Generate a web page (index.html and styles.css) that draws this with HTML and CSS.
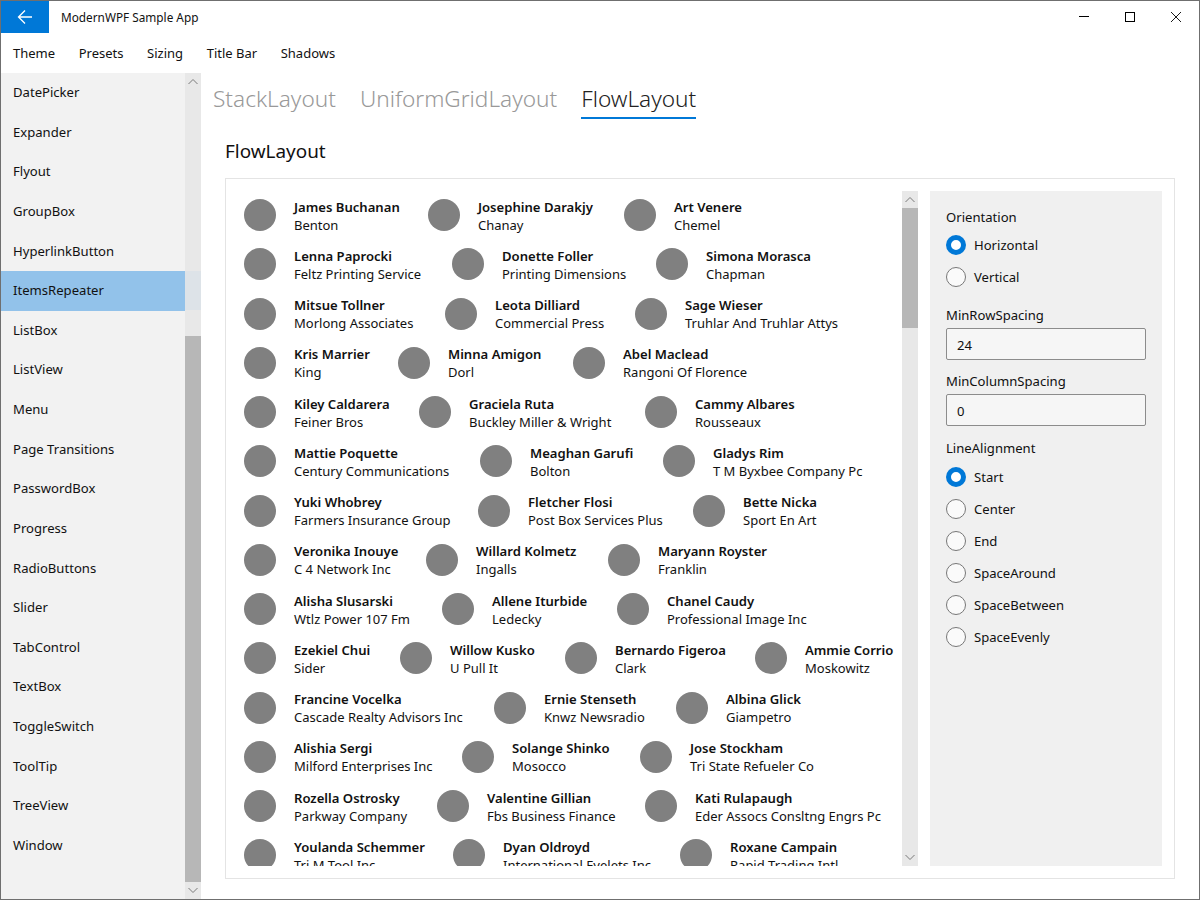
FILE: index.html
```html
<!DOCTYPE html>
<html>
  <head>
    <title>ModernWPF Sample App</title>
    <link rel="stylesheet" href="styles.css">
  </head>
  <body>
    <div class="window">
      <div class="titlebar">
        <div class="back-btn">
          <svg width="16" height="16" viewBox="0 0 16 16"><path d="M1.5 8H15M8 1.5L1.5 8L8 14.5" fill="none" stroke="#fff" stroke-width="1.3"/></svg>
        </div>
        <div class="app-title">ModernWPF Sample App</div>
        <div class="caption-btns">
          <svg class="caption-btn" width="46" height="32" viewBox="0 0 46 32"><path d="M18 15.5H28" stroke="#000" fill="none"/></svg>
          <svg class="caption-btn" width="46" height="32" viewBox="0 0 46 32"><rect x="18.5" y="11.5" width="9" height="9" stroke="#000" fill="none"/></svg>
          <svg class="caption-btn" width="46" height="32" viewBox="0 0 46 32"><path d="M18 11L28 21M28 11L18 21" stroke="#000" stroke-width="0.9" fill="none"/></svg>
        </div>
      </div>
      <div class="menubar">
        <span>Theme</span><span>Presets</span><span>Sizing</span><span>Title Bar</span><span>Shadows</span>
      </div>
      <div class="main">
        <div class="sidebar">
          <div class="nav-list">
            <div class="nav-item">DatePicker</div>
            <div class="nav-item">Expander</div>
            <div class="nav-item">Flyout</div>
            <div class="nav-item">GroupBox</div>
            <div class="nav-item">HyperlinkButton</div>
            <div class="nav-item selected">ItemsRepeater</div>
            <div class="nav-item">ListBox</div>
            <div class="nav-item">ListView</div>
            <div class="nav-item">Menu</div>
            <div class="nav-item">Page Transitions</div>
            <div class="nav-item">PasswordBox</div>
            <div class="nav-item">Progress</div>
            <div class="nav-item">RadioButtons</div>
            <div class="nav-item">Slider</div>
            <div class="nav-item">TabControl</div>
            <div class="nav-item">TextBox</div>
            <div class="nav-item">ToggleSwitch</div>
            <div class="nav-item">ToolTip</div>
            <div class="nav-item">TreeView</div>
            <div class="nav-item">Window</div>
          </div>
          <div class="scrollbar side-scroll">
            <svg class="arrow" width="16" height="17" viewBox="0 0 16 17"><path d="M3.5 11L8 6.5L12.5 11" fill="none" stroke="#7a7a7a"/></svg>
            <div class="side-hover"></div>
            <div class="side-thumb"></div>
            <svg class="arrow" width="16" height="17" viewBox="0 0 16 17"><path d="M3.5 6L8 10.5L12.5 6" fill="none" stroke="#7a7a7a"/></svg>
          </div>
        </div>
        <div class="content">
          <div class="tabs">
            <span class="tab">StackLayout</span>
            <span class="tab">UniformGridLayout</span>
            <span class="tab active">FlowLayout</span>
          </div>
          <h2 class="page-title">FlowLayout</h2>
          <div class="card">
            <div class="people">
              <div class="row">
                <div class="person" style="width:184px"><i></i><div><b>James Buchanan</b><p>Benton</p></div></div>
                <div class="person" style="width:196px"><i></i><div><b>Josephine Darakjy</b><p>Chanay</p></div></div>
                <div class="person"><i></i><div><b>Art Venere</b><p>Chemel</p></div></div>
              </div>
              <div class="row">
                <div class="person" style="width:208px"><i></i><div><b>Lenna Paprocki</b><p>Feltz Printing Service</p></div></div>
                <div class="person" style="width:204px"><i></i><div><b>Donette Foller</b><p>Printing Dimensions</p></div></div>
                <div class="person"><i></i><div><b>Simona Morasca</b><p>Chapman</p></div></div>
              </div>
              <div class="row">
                <div class="person" style="width:201px"><i></i><div><b>Mitsue Tollner</b><p>Morlong Associates</p></div></div>
                <div class="person" style="width:190px"><i></i><div><b>Leota Dilliard</b><p>Commercial Press</p></div></div>
                <div class="person"><i></i><div><b>Sage Wieser</b><p>Truhlar And Truhlar Attys</p></div></div>
              </div>
              <div class="row">
                <div class="person" style="width:154px"><i></i><div><b>Kris Marrier</b><p>King</p></div></div>
                <div class="person" style="width:175px"><i></i><div><b>Minna Amigon</b><p>Dorl</p></div></div>
                <div class="person"><i></i><div><b>Abel Maclead</b><p>Rangoni Of Florence</p></div></div>
              </div>
              <div class="row">
                <div class="person" style="width:175px"><i></i><div><b>Kiley Caldarera</b><p>Feiner Bros</p></div></div>
                <div class="person" style="width:226px"><i></i><div><b>Graciela Ruta</b><p>Buckley Miller &amp; Wright</p></div></div>
                <div class="person"><i></i><div><b>Cammy Albares</b><p>Rousseaux</p></div></div>
              </div>
              <div class="row">
                <div class="person" style="width:236px"><i></i><div><b>Mattie Poquette</b><p>Century Communications</p></div></div>
                <div class="person" style="width:183px"><i></i><div><b>Meaghan Garufi</b><p>Bolton</p></div></div>
                <div class="person"><i></i><div><b>Gladys Rim</b><p>T M Byxbee Company Pc</p></div></div>
              </div>
              <div class="row">
                <div class="person" style="width:234px"><i></i><div><b>Yuki Whobrey</b><p>Farmers Insurance Group</p></div></div>
                <div class="person" style="width:215px"><i></i><div><b>Fletcher Flosi</b><p>Post Box Services Plus</p></div></div>
                <div class="person"><i></i><div><b>Bette Nicka</b><p>Sport En Art</p></div></div>
              </div>
              <div class="row">
                <div class="person" style="width:182px"><i></i><div><b>Veronika Inouye</b><p>C 4 Network Inc</p></div></div>
                <div class="person" style="width:182px"><i></i><div><b>Willard Kolmetz</b><p>Ingalls</p></div></div>
                <div class="person"><i></i><div><b>Maryann Royster</b><p>Franklin</p></div></div>
              </div>
              <div class="row">
                <div class="person" style="width:198px"><i></i><div><b>Alisha Slusarski</b><p>Wtlz Power 107 Fm</p></div></div>
                <div class="person" style="width:175px"><i></i><div><b>Allene Iturbide</b><p>Ledecky</p></div></div>
                <div class="person"><i></i><div><b>Chanel Caudy</b><p>Professional Image Inc</p></div></div>
              </div>
              <div class="row">
                <div class="person" style="width:156px"><i></i><div><b>Ezekiel Chui</b><p>Sider</p></div></div>
                <div class="person" style="width:165px"><i></i><div><b>Willow Kusko</b><p>U Pull It</p></div></div>
                <div class="person" style="width:190px"><i></i><div><b>Bernardo Figeroa</b><p>Clark</p></div></div>
                <div class="person"><i></i><div><b>Ammie Corrio</b><p>Moskowitz</p></div></div>
              </div>
              <div class="row">
                <div class="person" style="width:250px"><i></i><div><b>Francine Vocelka</b><p>Cascade Realty Advisors Inc</p></div></div>
                <div class="person" style="width:182px"><i></i><div><b>Ernie Stenseth</b><p>Knwz Newsradio</p></div></div>
                <div class="person"><i></i><div><b>Albina Glick</b><p>Giampetro</p></div></div>
              </div>
              <div class="row">
                <div class="person" style="width:218px"><i></i><div><b>Alishia Sergi</b><p>Milford Enterprises Inc</p></div></div>
                <div class="person" style="width:178px"><i></i><div><b>Solange Shinko</b><p>Mosocco</p></div></div>
                <div class="person"><i></i><div><b>Jose Stockham</b><p>Tri State Refueler Co</p></div></div>
              </div>
              <div class="row">
                <div class="person" style="width:193px"><i></i><div><b>Rozella Ostrosky</b><p>Parkway Company</p></div></div>
                <div class="person" style="width:208px"><i></i><div><b>Valentine Gillian</b><p>Fbs Business Finance</p></div></div>
                <div class="person"><i></i><div><b>Kati Rulapaugh</b><p>Eder Assocs Consltng Engrs Pc</p></div></div>
              </div>
              <div class="row">
                <div class="person" style="width:209px"><i></i><div><b>Youlanda Schemmer</b><p>Tri M Tool Inc</p></div></div>
                <div class="person" style="width:227px"><i></i><div><b>Dyan Oldroyd</b><p>International Eyelets Inc</p></div></div>
                <div class="person"><i></i><div><b>Roxane Campain</b><p>Rapid Trading Intl</p></div></div>
              </div>
            </div>
            <div class="scrollbar list-scroll">
              <svg class="arrow" width="16" height="17" viewBox="0 0 16 17"><path d="M3.5 11L8 6.5L12.5 11" fill="none" stroke="#7a7a7a"/></svg>
              <div class="list-thumb"></div>
              <svg class="arrow bottom" width="16" height="17" viewBox="0 0 16 17"><path d="M3.5 6L8 10.5L12.5 6" fill="none" stroke="#7a7a7a"/></svg>
            </div>
            <div class="options">
              <div class="opt-label">Orientation</div>
              <div class="radio on">Horizontal</div>
              <div class="radio">Vertical</div>
              <div class="opt-label spaced">MinRowSpacing</div>
              <div class="field">24</div>
              <div class="opt-label spaced">MinColumnSpacing</div>
              <div class="field">0</div>
              <div class="opt-label spaced">LineAlignment</div>
              <div class="radio on">Start</div>
              <div class="radio">Center</div>
              <div class="radio">End</div>
              <div class="radio">SpaceAround</div>
              <div class="radio">SpaceBetween</div>
              <div class="radio">SpaceEvenly</div>
            </div>
          </div>
        </div>
      </div>
    </div>
  </body>
</html>
```

FILE: styles.css
```css
/* Window frame */
*, *::before, *::after {
  box-sizing: border-box;
}
body {
  margin: 0;
  font-family: "Noto Sans", Arial, sans-serif;
  font-size: 13.1px;
  color: #111;
  background: #fff;
}
.window {
  width: 1200px;
  height: 900px;
  border: 1px solid #6f6f6f;
  display: flex;
  flex-direction: column;
  overflow: hidden;
}

/* Title bar */
.titlebar {
  height: 32px;
  display: flex;
  align-items: center;
  flex: none;
}
.back-btn {
  width: 48px;
  height: 32px;
  background: #0078d7;
  display: flex;
  align-items: center;
  justify-content: center;
}
.app-title {
  margin-left: 12px;
  font-size: 11.8px;
}
.caption-btns {
  margin-left: auto;
  display: flex;
}

/* Menu */
.menubar {
  height: 40px;
  flex: none;
  display: flex;
  align-items: center;
  gap: 23.6px;
  padding-left: 12px;
  font-size: 13px;
}

.main {
  flex: 1;
  display: flex;
  min-height: 0;
}

/* Sidebar */
.sidebar {
  width: 200px;
  flex: none;
  display: flex;
  background: #f2f2f2;
}
.nav-list {
  width: 184px;
}
.nav-item {
  height: 39.63px;
  line-height: 38px;
  padding-left: 12px;
}
.nav-item.selected {
  background: #92c2ea;
}
.scrollbar {
  width: 16px;
  flex: none;
  background: #e8e8e8;
  display: flex;
  flex-direction: column;
}
.arrow {
  flex: none;
  display: block;
}
.side-hover {
  height: 221px;
  margin-top: -1px;
  position: relative;
}
.side-hover::after {
  content: "";
  position: absolute;
  left: 0;
  right: 0;
  top: 182px;
  height: 39px;
  background: #dde3e8;
}
.side-thumb {
  flex: 1;
  background: #b7b7b7;
  margin-top: 26px;
}

/* Content */
.content {
  flex: 1;
  min-width: 0;
  padding: 0 24px 20px 24px;
  display: flex;
  flex-direction: column;
}
.tabs {
  display: flex;
  gap: 24px;
  height: 47px;
  margin-left: -12px;
  padding-top: 6px;
}
.tab {
  font-size: 22.6px;
  font-weight: 300;
  line-height: 39px;
  height: 40px;
  color: #999;
}
.tab.active {
  color: #222;
  border-bottom: 2px solid #0078d7;
}
.page-title {
  margin: 17px 0 13px;
  font-size: 18.9px;
  font-weight: 400;
  line-height: 28px;
}
.card {
  flex: 1;
  min-height: 0;
  border: 1px solid #e4e4e4;
  display: flex;
  padding: 12px;
}

/* People list */
.people {
  width: 664px;
  flex: none;
  overflow: hidden;
  padding: 8px 0 0 6px;
}
.row {
  height: 49.25px;
  display: flex;
}
.person {
  display: flex;
  gap: 18px;
  flex: none;
}
.person i {
  width: 32px;
  height: 32px;
  flex: none;
  border-radius: 50%;
  background: #808080;
}
.person b {
  display: block;
  font-weight: 600;
  line-height: 18px;
  margin-top: -1.3px;
  white-space: nowrap;
}
.person p {
  margin: 0;
  font-size: 13px;
  line-height: 19.6px;
  white-space: nowrap;
}
.list-scroll .list-thumb {
  height: 120px;
  background: #b7b7b7;
}
.list-scroll .bottom {
  margin-top: auto;
}

/* Options panel */
.options {
  width: 232px;
  flex: none;
  margin-left: 12px;
  background: #f0f0f0;
  padding: 17px 16px 16px;
}
.opt-label {
  line-height: 19px;
  margin-bottom: 2px;
}
.opt-label.spaced {
  margin-top: 12.67px;
  margin-bottom: 3px;
}
.radio {
  height: 32px;
  display: flex;
  align-items: center;
  gap: 8px;
}
.radio::before {
  content: "";
  width: 20px;
  height: 20px;
  border-radius: 50%;
  border: 1.5px solid #777;
  background: #fafafa;
  flex: none;
}
.radio.on::before {
  border: 5.5px solid #0078d7;
  background: #fff;
}
.field {
  width: 200px;
  height: 32px;
  border: 1px solid #8c8c8c;
  border-radius: 2px;
  background: #f6f6f6;
  line-height: 32px;
  padding-left: 10px;
}
```
